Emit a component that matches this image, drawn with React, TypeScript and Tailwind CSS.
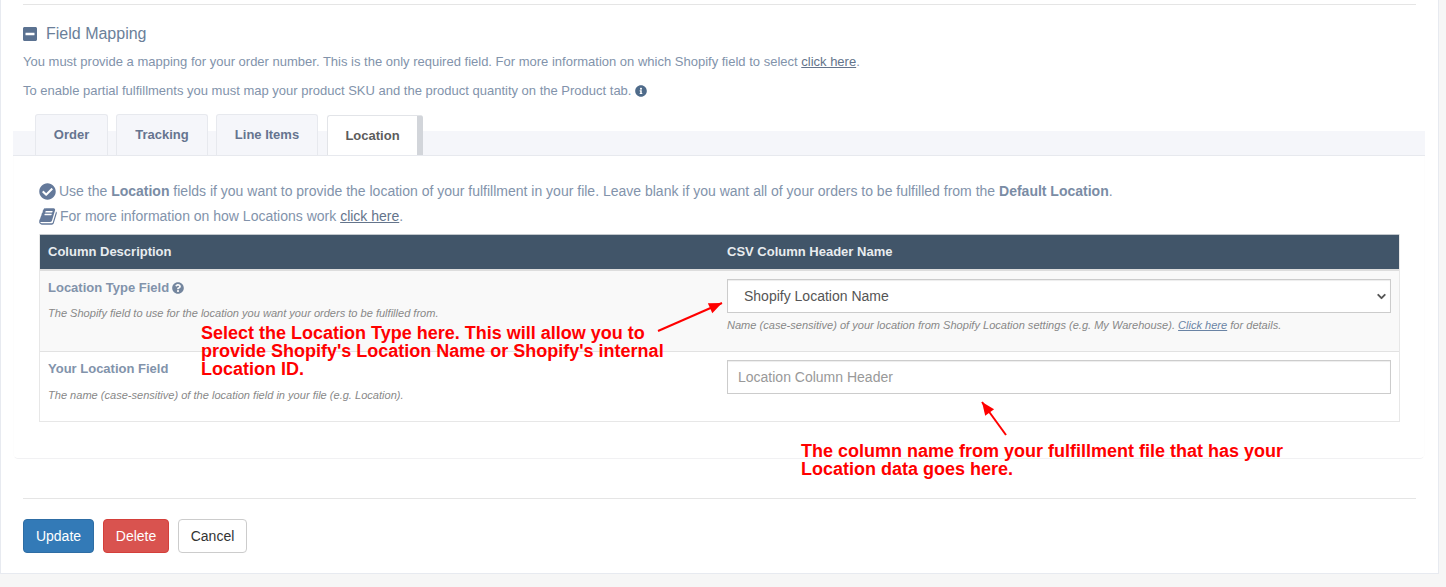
import { ChevronDown } from 'lucide-react';
import { FaCheckCircle, FaInfoCircle, FaMinusSquare, FaQuestionCircle } from 'react-icons/fa';

const tabs = [
  { label: 'Order', width: 'w-[73px]' },
  { label: 'Tracking', width: 'w-[92px]' },
  { label: 'Line Items', width: 'w-[102px]' },
];

function BookIcon({ className }: { className?: string }) {
  return (
    <svg viewBox="0 0 1664 1792" fill="currentColor" className={className}>
      <path d="M1639 478q40 57 18 129l-275 906q-19 64-76.5 107.5t-122.5 43.5h-923q-77 0-148.5-53.5t-99.5-131.5q-24-67-2-127 0-4 3-27t4-37q1-8-3-21.5t-3-19.5q2-11 8-21t16.5-23.5 16.5-23.5q23-38 45-91.5t30-91.5q3-10 .5-30t-.5-28q3-11 17-28t17-23q21-36 42-92t25-90q1-9-2.5-32t.5-28q4-13 22-30.5t22-22.5q19-26 42.5-84.5t27.5-96.5q1-8-3-25.5t-2-26.5q2-8 9-18t18-23 17-21q8-12 16.5-30.5t15-35 16-36 19.5-32 26.5-23.5 36-11.5 47.5 5.5l-1 3q38-9 51-9h761q74 0 114 56t18 130l-274 906q-36 119-71.5 153.5t-128.5 34.5h-869q-27 0-38 15-11 16-1 43 24 70 144 70h923q29 0 56-15.5t35-41.5l300-987q7-22 5-57 38 15 59 43zm-1064 2q-4 13 2 22.5t20 9.5h608q13 0 25.5-9.5t16.5-22.5l21-64q4-13-2-22.5t-20-9.5h-608q-13 0-25.5 9.5t-16.5 22.5zm-83 256q-4 13 2 22.5t20 9.5h608q13 0 25.5-9.5t16.5-22.5l21-64q4-13-2-22.5t-20-9.5h-608q-13 0-25.5 9.5t-16.5 22.5z" />
    </svg>
  );
}

function Arrow({ className, x1, y1, x2, y2, w, h }: { className: string; x1: number; y1: number; x2: number; y2: number; w: number; h: number }) {
  const angle = (Math.atan2(y2 - y1, x2 - x1) * 180) / Math.PI;
  return (
    <svg width={w} height={h} className={className}>
      <line x1={x1} y1={y1} x2={x2} y2={y2} stroke="#ff0000" strokeWidth="2" />
      <polygon points="0,0 -13,-5.5 -13,5.5" fill="#ff0000" transform={`translate(${x2} ${y2}) rotate(${angle})`} />
    </svg>
  );
}

export default function App() {
  return (
    <div className="relative h-[587px] overflow-hidden bg-[#f6f6f6] font-['Liberation_Sans',Arial,sans-serif] text-[13px] text-[#8293ab]">
      <div className="h-[574px] w-[1439px] border-x border-b border-[#e7eaf0] bg-white pt-1">
        <div className="mx-[22px] border-t border-[#e5e5e5]" />

        <div className="mx-[22px] mt-[20px] flex h-[18px] items-center gap-[9px] text-[16px] text-[#6b7f99]">
          <FaMinusSquare className="h-[16px] w-[14px] text-[#5b7291]" />
          <span>Field Mapping</span>
        </div>
        <p className="mx-[22px] mt-[10px] h-[18px] leading-[18px]">
          You must provide a mapping for your order number. This is the only required field. For more information on which Shopify field to select{' '}
          <a className="text-[#64748b] underline">click here</a>.
        </p>
        <p className="mx-[22px] mt-[11px] flex h-[18px] items-center gap-[4px] leading-[18px]">
          <span>To enable partial fulfillments you must map your product SKU and the product quantity on the Product tab.</span>
          <FaInfoCircle className="size-[12px] text-[#4f6b8a]" />
        </p>

        {/* tab strip */}
        <div className="relative ml-[12px] mr-[13px] mt-[14px] h-[42px]">
          <div className="absolute inset-x-0 bottom-0 h-[25px] border-b border-[#e7e9ee] bg-[#f5f6fa]" />
          <div className="relative flex h-[41px] items-end pl-[22px]">
            {tabs.map((tab) => (
              <div
                key={tab.label}
                className={`mr-[8px] flex h-[41px] items-center justify-center rounded-t-[3px] border-x border-t border-[#e7e9ee] bg-[#f5f6fa] pb-[1px] font-bold text-[#66748f] ${tab.width}`}
              >
                {tab.label}
              </div>
            ))}
            <div className="ml-[1px] flex h-[40px] w-[96px] items-center justify-center rounded-t-[3px] border-l border-t border-r-[6px] border-[#e2e4e8] border-r-[#d2d5da] bg-white font-bold text-[#5c5c5c]">
              Location
            </div>
          </div>
        </div>

        {/* tab panel */}
        <div className="ml-[12px] mr-[13px] h-[303px] rounded-b-[5px] border-x border-b border-x-[#fdfdfd] border-b-[#f1f1f3] px-[25px] pt-[26px]">
          <p className="flex h-[18px] items-center gap-[3px] text-[14px]">
            <FaCheckCircle className="size-[17px] text-[#64799a]" />
            <span>
              Use the <b className="text-[#7a8ca5]">Location</b> fields if you want to provide the location of your fulfillment in your file. Leave blank if you want all of your orders to be fulfilled from the{' '}
              <b className="text-[#7a8ca5]">Default Location</b>.
            </span>
          </p>
          <p className="mt-[7px] flex h-[18px] items-center gap-[3px] text-[14px]">
            <BookIcon className="h-[19px] w-[18px] text-[#64799a]" />
            <span>
              For more information on how Locations work <a className="text-[#64748b] underline">click here</a>.
            </span>
          </p>

          <div className="mt-[9px] w-[1361px] border-x border-b border-[#e7e7e7]">
            <div className="grid h-[35px] grid-cols-[679px_1fr] items-center border-t border-[#c2c7cc] bg-[#415569] px-[8px] font-bold text-[#e8ecef]">
              <span>Column Description</span>
              <span>CSV Column Header Name</span>
            </div>
            <div className="grid h-[83px] grid-cols-[679px_1fr] border-t-2 border-b border-t-[#dddddd] border-b-[#e2e2e2] bg-[#f9f9f9]">
              <div className="pl-[8px] pt-[7px]">
                <div className="flex items-center gap-[3px] font-bold text-[#8293ab]">
                  Location Type Field
                  <FaQuestionCircle className="size-[12px] text-[#74869e]" />
                </div>
                <p className="mt-[7px] text-[11.05px] italic text-[#888]">The Shopify field to use for the location you want your orders to be fulfilled from.</p>
              </div>
              <div className="pl-[8px] pr-[8px] pt-[8px]">
                <div className="relative flex h-[34px] items-center border border-[#ccc] bg-white pl-[16px] text-[14px] text-[#555] shadow-[inset_0_1px_1px_rgba(0,0,0,0.075)]">
                  Shopify Location Name
                  <ChevronDown className="absolute right-[2px] size-[13px] text-[#555]" strokeWidth={3.5} />
                </div>
                <p className="mt-[4px] text-[11.05px] italic text-[#888]">
                  Name (case-sensitive) of your location from Shopify Location settings (e.g. My Warehouse). <a className="text-[#6a84a5] underline">Click here</a> for details.
                </p>
              </div>
            </div>
            <div className="grid h-[69px] grid-cols-[679px_1fr]">
              <div className="pl-[8px] pt-[7px]">
                <div className="font-bold text-[#8293ab]">Your Location Field</div>
                <p className="mt-[8px] text-[11.05px] italic text-[#888]">The name (case-sensitive) of the location field in your file (e.g. Location).</p>
              </div>
              <div className="pl-[8px] pr-[8px] pt-[8px]">
                <div className="flex h-[34px] items-center border border-[#ccc] bg-white pl-[10px] text-[14px] text-[#999] shadow-[inset_0_1px_1px_rgba(0,0,0,0.075)]">Location Column Header</div>
              </div>
            </div>
          </div>
        </div>

        <div className="mx-[22px] mt-[39px] border-t border-[#e5e5e5]" />

        <div className="mx-[22px] mt-[20px] flex gap-[9px] text-[14px]">
          <button className="flex h-[34px] w-[71px] items-center justify-center rounded-[4px] border border-[#2e6da4] bg-[#337ab7] text-white">Update</button>
          <button className="flex h-[34px] w-[66px] items-center justify-center rounded-[4px] border border-[#d43f3a] bg-[#d9534f] text-white">Delete</button>
          <button className="flex h-[34px] w-[69px] items-center justify-center rounded-[4px] border border-[#ccc] bg-white text-[#333]">Cancel</button>
        </div>
      </div>

      {/* red annotations drawn over the screenshot */}
      <div className="absolute left-[201px] top-[324px] w-[480px] text-[18px] font-bold leading-[18px] text-[#ff0000]">
        Select the Location Type here. This will allow you to provide Shopify's Location Name or Shopify's internal Location ID.
      </div>
      <div className="absolute left-[801px] top-[442px] w-[500px] text-[18px] font-bold leading-[18px] text-[#ff0000]">
        The column name from your fulfillment file that has your Location data goes here.
      </div>
      <Arrow className="absolute left-[655px] top-[300px]" w={70} h={35} x1={3} y1={31} x2={67} y2={3} />
      <Arrow className="absolute left-[978px] top-[398px]" w={32} h={40} x1={28} y1={37} x2={4} y2={4} />
    </div>
  );
}
